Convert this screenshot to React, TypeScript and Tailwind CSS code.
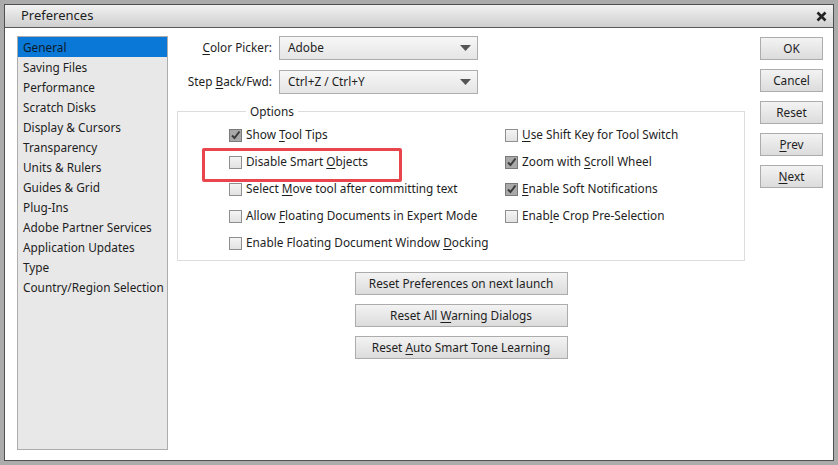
import React from 'react'

const CATEGORIES = [
  'General',
  'Saving Files',
  'Performance',
  'Scratch Disks',
  'Display & Cursors',
  'Transparency',
  'Units & Rulers',
  'Guides & Grid',
  'Plug-Ins',
  'Adobe Partner Services',
  'Application Updates',
  'Type',
  'Country/Region Selection',
]

// label split around the underlined mnemonic letter
type Opt = { pre: string; key: string; post: string; checked: boolean }

const LEFT_OPTS: Opt[] = [
  { pre: 'Show ', key: 'T', post: 'ool Tips', checked: true },
  { pre: 'Disable Smart ', key: 'O', post: 'bjects', checked: false },
  { pre: 'Select ', key: 'M', post: 'ove tool after committing text', checked: false },
  { pre: 'Allow ', key: 'F', post: 'loating Documents in Expert Mode', checked: false },
  { pre: 'Enable Floating Document Window ', key: 'D', post: 'ocking', checked: false },
]

const RIGHT_OPTS: Opt[] = [
  { pre: '', key: 'U', post: 'se Shift Key for Tool Switch', checked: false },
  { pre: 'Zoom with ', key: 'S', post: 'croll Wheel', checked: true },
  { pre: '', key: 'E', post: 'nable Soft Notifications', checked: true },
  { pre: 'Enab', key: 'l', post: 'e Crop Pre-Selection', checked: false },
]

function Mn({ pre, k, post }: { pre: string; k: string; post: string }) {
  return (
    <span>
      {pre}
      <span className="underline underline-offset-2">{k}</span>
      {post}
    </span>
  )
}

function Check({ opt }: { opt: Opt }) {
  return (
    <div className="h-[27px] flex items-center gap-[4px]">
      {opt.checked ? (
        <span className="w-[13px] h-[13px] border border-[#7a7a7a] bg-[#a9a9a9] flex items-center justify-center">
          <svg width="11" height="11" viewBox="0 0 11 11">
            <path d="M2 5.5 L4.5 8 L9.5 1.5" fill="none" stroke="#3b3b3b" strokeWidth="2" />
          </svg>
        </span>
      ) : (
        <span className="w-[13px] h-[13px] border border-[#8f8f8f] bg-gradient-to-b from-[#f4f4f4] to-[#e2e2e2]" />
      )}
      <Mn pre={opt.pre} k={opt.key} post={opt.post} />
    </div>
  )
}

function Select({ value }: { value: string }) {
  return (
    <div className="w-[199px] h-[24px] border border-[#adadad] bg-gradient-to-b from-[#f7f7f7] to-[#e5e5e5] flex items-center justify-between pl-[8px] pr-[6px]">
      <span>{value}</span>
      <svg width="11" height="6" viewBox="0 0 11 6">
        <path d="M0 0 H11 L5.5 6 Z" fill="#555" />
      </svg>
    </div>
  )
}

function Btn({ children, className = '' }: { children: React.ReactNode; className?: string }) {
  return (
    <div
      className={
        'h-[23px] border border-[#acacac] bg-gradient-to-b from-[#f3f3f3] to-[#dcdcdc] flex items-center justify-center ' +
        className
      }
    >
      {children}
    </div>
  )
}

export default function App() {
  return (
    <div
      className="relative w-[838px] h-[465px] bg-[#ababab] p-[4px] text-[11.8px] text-[#1e1e1e]"
      style={{ fontFamily: '"Noto Sans", Tahoma, sans-serif' }}
    >
      <div className="h-full border border-[#505050] flex flex-col">
        <div className="h-[23px] shrink-0 bg-gradient-to-b from-[#f2f2f2] to-[#cfcfcf] border-b border-[#5a5a5a] flex items-center justify-between pl-[16px] pr-[6px] text-[13px]">
          <span>Preferences</span>
          <svg width="11" height="11" viewBox="0 0 11 11">
            <path d="M1.5 1.5 L9.5 9.5 M9.5 1.5 L1.5 9.5" stroke="#222" strokeWidth="2.6" />
          </svg>
        </div>

        <div className="flex-1 bg-white flex pl-[12px] pt-[8px] pr-[10px]">
          <div className="w-[151px] h-[414px] border border-[#adadad] bg-[#e8e8e8] flex flex-col">
            {CATEGORIES.map((c, i) => (
              <div
                key={c}
                className={
                  'h-[20px] flex items-center pl-[5px] pt-[1px] ' + (i === 0 ? 'bg-[#0a78d7] text-[#0d1a2a]' : '')
                }
              >
                {c}
              </div>
            ))}
          </div>

          <div className="ml-[9px] w-[568px] flex flex-col">
            <div className="flex items-center h-[24px]">
              <div className="w-[96px] text-right pr-[1px]">
                <Mn pre="" k="C" post="olor Picker:" />
              </div>
              <div className="ml-[6px]">
                <Select value="Adobe" />
              </div>
            </div>
            <div className="flex items-center h-[24px] mt-[10px]">
              <div className="w-[96px] text-right pr-[1px]">
                <Mn pre="Step " k="B" post="ack/Fwd:" />
              </div>
              <div className="ml-[6px]">
                <Select value="Ctrl+Z / Ctrl+Y" />
              </div>
            </div>

            <fieldset className="mt-[9px] h-[158px] border border-[#dcdcdc] pl-[51px] pt-[1px]">
              <legend className="ml-[17px] px-[4px]">Options</legend>
              <div className="grid grid-cols-[276px_1fr]">
                <div className="flex flex-col">
                  {LEFT_OPTS.map(o => (
                    <Check key={o.key + o.pre} opt={o} />
                  ))}
                </div>
                <div className="flex flex-col">
                  {RIGHT_OPTS.map(o => (
                    <Check key={o.key + o.pre} opt={o} />
                  ))}
                </div>
              </div>
            </fieldset>

            <div className="mt-[11px] flex flex-col items-center gap-[9px]">
              <Btn className="w-[213px]">Reset Preferences on next launch</Btn>
              <Btn className="w-[213px]">
                <Mn pre="Reset All " k="W" post="arning Dialogs" />
              </Btn>
              <Btn className="w-[213px]">
                <Mn pre="Reset " k="A" post="uto Smart Tone Learning" />
              </Btn>
            </div>
          </div>

          <div className="ml-auto pt-[1px] flex flex-col gap-[9px]">
            <Btn className="w-[63px]">OK</Btn>
            <Btn className="w-[63px]">Cancel</Btn>
            <Btn className="w-[63px]">Reset</Btn>
            <Btn className="w-[63px]">
              <Mn pre="" k="P" post="rev" />
            </Btn>
            <Btn className="w-[63px]">
              <Mn pre="" k="N" post="ext" />
            </Btn>
          </div>
        </div>
      </div>

      <div className="absolute left-[202px] top-[148px] w-[200px] h-[34px] border-[3px] border-[#e8454d] rounded-[2px]" />
    </div>
  )
}
